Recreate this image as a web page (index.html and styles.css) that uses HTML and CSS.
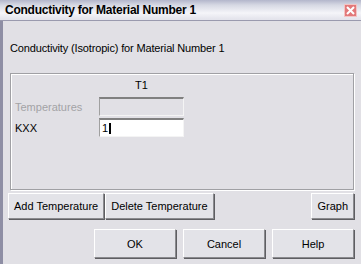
FILE: index.html
```html
<!DOCTYPE html>
<html lang="en">
<head>
    <meta charset="UTF-8">
    <title>Conductivity for Material Number 1</title>
    <link rel="stylesheet" href="styles.css">
</head>
<body>
    <div class="window">
        <div class="titlebar">
            <span class="title">Conductivity for Material Number 1</span>
            <span class="close">
                <svg width="9" height="9" viewBox="0 0 9 9"><path d="M1 1L8 8M8 1L1 8" stroke="#fff" stroke-width="2"/></svg>
            </span>
        </div>
        <div class="frame">
            <p class="intro">Conductivity (Isotropic) for Material Number 1</p>

            <div class="group">
                <div class="col-head">T1</div>
                <div class="row">
                    <span class="label disabled">Temperatures</span>
                    <span class="field field-off"></span>
                </div>
                <div class="row">
                    <span class="label">KXX</span>
                    <span class="field">1<i class="caret"></i></span>
                </div>
            </div>

            <div class="tools">
                <button class="btn">Add Temperature</button>
                <button class="btn">Delete Temperature</button>
                <button class="btn btn-right">Graph</button>
            </div>

            <div class="actions">
                <button class="btn btn-wide">OK</button>
                <button class="btn btn-wide">Cancel</button>
                <button class="btn btn-wide">Help</button>
            </div>
        </div>
    </div>
</body>
</html>
```

FILE: styles.css
```css
* {
    margin: 0;
    padding: 0;
    box-sizing: border-box;
}

body {
    background: #e1e0e5;
    font-family: 'Liberation Sans', Arial, sans-serif;
    font-size: 11px;
    color: #000;
}

.window {
    width: 361px;
    height: 264px;
    overflow: hidden;
    background: #e1e0e5;
}

.titlebar {
    height: 21px;
    display: flex;
    align-items: center;
    justify-content: space-between;
    padding: 0 4px 0 5px;
    background: linear-gradient(#b3b6cb 0, #d6d8e3 5px, #f5f5f9 13px, #e4e4ec 19px);
    border-bottom: 1px solid #9a9aae;
}

.title {
    font-family: 'Liberation Sans', Arial, sans-serif;
    font-weight: bold;
    font-size: 12px;
    letter-spacing: -0.25px;
    color: #000;
}

.close {
    width: 13px;
    height: 13px;
    display: flex;
    align-items: center;
    justify-content: center;
    background: #e2787a;
    border: 1px solid #f3c4c4;
}

.frame {
    height: 243px;
    border-left: 3px solid #8e8ea4;
    padding: 0 7px 0 5px;
}

.intro {
    padding: 21px 0 0 2px;
    height: 52px;
    letter-spacing: -0.15px;
}

.group {
    height: 117px;
    margin-left: 2px;
    border: 1px solid #a0a0a4;
    box-shadow: inset 1px 1px 0 #fff, 1px 1px 0 #fff;
    padding: 5px 0 0 4px;
}

.col-head {
    width: 85px;
    margin-left: 84px;
    text-align: center;
    height: 17px;
}

.row {
    display: flex;
    align-items: center;
    height: 21px;
}

.label {
    width: 84px;
}

.disabled {
    color: #a3a3a6;
}

.field {
    width: 85px;
    height: 19px;
    background: #fff;
    border-top: 2px solid #808080;
    border-left: 1px solid #a0a0a0;
    border-bottom: 1px solid #f4f4f4;
    border-right: 1px solid #f4f4f4;
    padding-left: 2px;
    display: flex;
    align-items: center;
}

.field-off {
    background: #e1e0e5;
}

.caret {
    display: inline-block;
    width: 2px;
    height: 11px;
    background: #000;
    margin-left: 1px;
}

.tools {
    display: flex;
    gap: 1px;
    padding: 3px 0 0 0;
    height: 39px;
}

.btn {
    font-family: 'Liberation Sans', Arial, sans-serif;
    font-size: 11px;
    color: #000;
    height: 26px;
    padding: 0 5px;
    background: #e3e3e8;
    border: 1px solid;
    border-color: #fff #8a8a8e #8a8a8e #fff;
    box-shadow: 1px 1px 0 #5e5e62;
}

.btn-right {
    margin-left: auto;
}

.actions {
    display: flex;
    justify-content: flex-end;
    gap: 7px;
}

.btn-wide {
    width: 82px;
    height: 29px;
}
```
